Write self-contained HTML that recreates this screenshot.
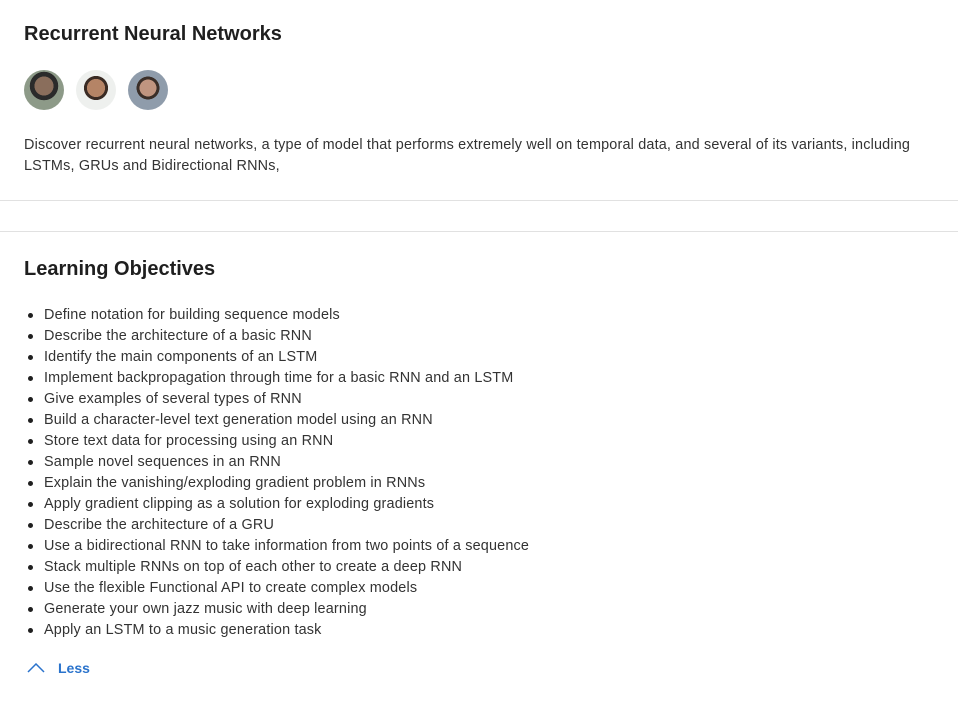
<!DOCTYPE html>
<html><head><style>
body{margin:0;background:#fff;font-family:"Liberation Sans",sans-serif;color:#1f1f1f;width:958px;height:702px;overflow:hidden;position:relative}
h1,h2{position:absolute;left:24px;margin:0;font-size:20px;font-weight:bold;color:#1f1f1f}
.av{position:absolute;top:70px;width:40px;height:40px;border-radius:50%;overflow:hidden}
.desc{position:absolute;left:24px;top:135px;width:910px;font-size:14.4px;line-height:21px;color:#333;letter-spacing:0.18px}
.line{position:absolute;left:0;width:958px;height:1px;background:#e1e1e1}
ul{position:absolute;left:24px;top:305px;margin:0;padding:0;list-style:none;font-size:14.4px;line-height:21px;color:#333;letter-spacing:0.18px}
li{padding-left:20px;position:relative}
li:before{content:"";position:absolute;left:4px;top:8px;width:5px;height:5px;border-radius:50%;background:#1f1f1f}
.less{position:absolute;left:58px;top:660px;font-size:14px;font-weight:bold;color:#2a73cc}
</style></head><body>
<h1 style="top:23px">Recurrent Neural Networks</h1>
<div class="av" style="left:24px;background:radial-gradient(circle at 50% 40%,#8a6e5c 0 30%,#2b2b2b 31% 45%,#8d9a88 46%)"></div>
<div class="av" style="left:76px;background:radial-gradient(circle at 50% 45%,#b58466 0 30%,#3a2b24 31% 40%,#eef0ee 41%)"></div>
<div class="av" style="left:128px;background:radial-gradient(circle at 50% 45%,#c09580 0 28%,#3a2e28 29% 38%,#8f9cab 39%)"></div>
<div class="desc">Discover recurrent neural networks, a type of model that performs extremely well on temporal data, and several of its variants, including LSTMs, GRUs and Bidirectional RNNs,</div>
<div class="line" style="top:200px"></div>
<div class="line" style="top:231px"></div>
<h2 style="top:258px">Learning Objectives</h2>
<ul>
<li>Define notation for building sequence models</li>
<li>Describe the architecture of a basic RNN</li>
<li>Identify the main components of an LSTM</li>
<li>Implement backpropagation through time for a basic RNN and an LSTM</li>
<li>Give examples of several types of RNN</li>
<li>Build a character-level text generation model using an RNN</li>
<li>Store text data for processing using an RNN</li>
<li>Sample novel sequences in an RNN</li>
<li>Explain the vanishing/exploding gradient problem in RNNs</li>
<li>Apply gradient clipping as a solution for exploding gradients</li>
<li>Describe the architecture of a GRU</li>
<li>Use a bidirectional RNN to take information from two points of a sequence</li>
<li>Stack multiple RNNs on top of each other to create a deep RNN</li>
<li>Use the flexible Functional API to create complex models</li>
<li>Generate your own jazz music with deep learning</li>
<li>Apply an LSTM to a music generation task</li>
</ul>
<svg style="position:absolute;left:27px;top:663px" width="18" height="10"><path d="M1 9 L9 1 L17 9" fill="none" stroke="#2a73cc" stroke-width="1.5"/></svg>
<div class="less">Less</div>
</body></html>
